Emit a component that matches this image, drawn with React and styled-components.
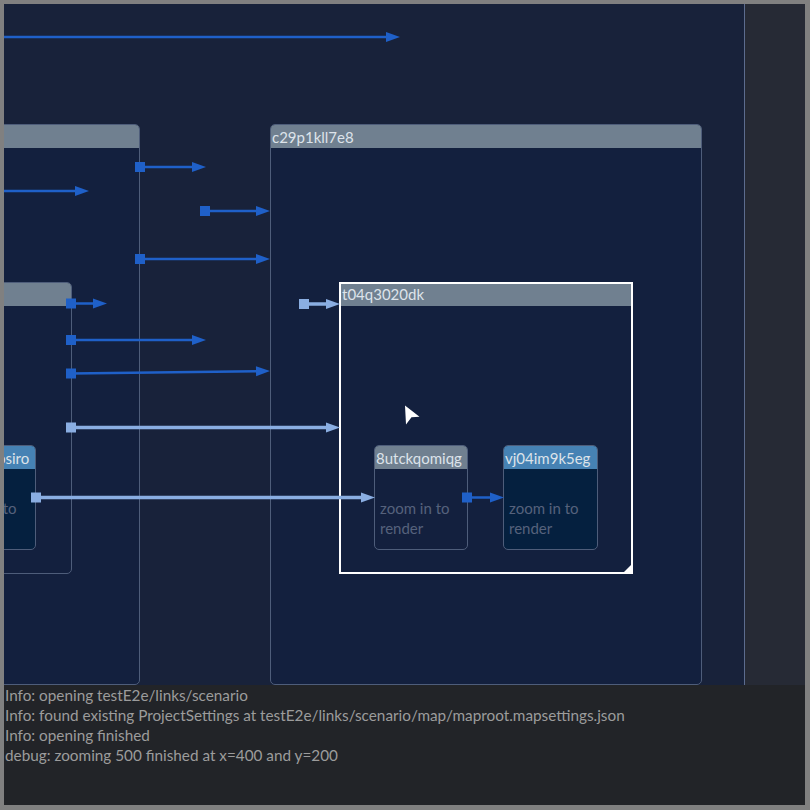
import React from "react";
import styled, { createGlobalStyle } from "styled-components";

const Global = createGlobalStyle`
  html, body { margin: 0; padding: 0; background: #808080; }
  body { font-family: Lato, "Open Sans", sans-serif; }
`;

const Frame = styled.div`
  width: 810px;
  height: 810px;
  box-sizing: border-box;
  padding: 4px 5px 5px 4px;
  background: #808080;
  display: grid;
  grid-template-columns: 740px 1px 1fr;
  grid-template-rows: 681px 1fr;
`;

const Canvas = styled.div`
  position: relative;
  overflow: hidden;
  background: #18223a;
`;

const Plane = styled.div`
  position: absolute;
  left: -4px;
  top: -4px;
  width: 810px;
  height: 810px;
`;

const Divider = styled.div`
  background: #5c6c8e;
`;

const SidePanel = styled.div`
  background: #262a35;
`;

const LogPanel = styled.div`
  grid-column: 1 / -1;
  background: #222428;
  color: #9c9c9c;
  font-size: 15.3px;
  line-height: 20px;
  padding: 0 0 0 1px;
  display: flex;
  flex-direction: column;
`;

const LogLine = styled.div`
  white-space: nowrap;
`;

const NodeBox = styled.div`
  position: absolute;
  left: ${(p) => p.$x}px;
  top: ${(p) => p.$y}px;
  width: ${(p) => p.$w}px;
  height: ${(p) => p.$h}px;
  box-sizing: border-box;
  border: ${(p) => (p.$selected ? "2px solid #ffffff" : "1px solid #4e5d7a")};
  border-radius: ${(p) => (p.$selected ? "0" : "5px")};
  background: ${(p) => p.$body};
  display: flex;
  flex-direction: column;
  overflow: hidden;
`;

const Header = styled.div`
  flex: none;
  height: ${(p) => (p.$selected ? "22px" : "23px")};
  background: ${(p) => p.$color};
  color: #dde3ea;
  font-size: 15px;
  line-height: ${(p) => (p.$selected ? "21px" : "24px")};
  padding-left: 1px;
  white-space: nowrap;
  overflow: hidden;
`;

const Body = styled.div`
  flex: 1;
  padding: 29px 5px 0 5px;
  color: #56627c;
  font-size: 15px;
  line-height: 20px;
`;

const ResizeGrip = styled.div`
  position: absolute;
  right: 0;
  bottom: 0;
  width: 0;
  height: 0;
  border-left: 7px solid transparent;
  border-bottom: 7px solid #ffffff;
`;

const EdgeLayer = styled.svg`
  position: absolute;
  left: 0;
  top: 0;
  width: 810px;
  height: 810px;
  pointer-events: none;
`;

const SLATE = "#708090";
const STEEL = "#4682b4";
const NAVY = "#13203e";
const DEEP = "#05203f";

const nodes = [
  { id: "a", x: -300, y: 124, w: 440, h: 561, header: SLATE, body: NAVY, label: "" },
  { id: "c29", x: 270, y: 124, w: 432, h: 561, header: SLATE, body: NAVY, label: "c29p1kll7e8" },
  { id: "b", x: -200, y: 282, w: 272, h: 292, header: SLATE, body: NAVY, label: "" },
  { id: "t04", x: 339, y: 282, w: 294, h: 292, header: SLATE, body: NAVY, label: "t04q3020dk", selected: true },
  { id: "c", x: -59, y: 445, w: 95, h: 105, header: STEEL, body: DEEP, label: "h9x2mposiro", text: "zoom in to render" },
  { id: "8ut", x: 374, y: 445, w: 94, h: 105, header: SLATE, body: NAVY, label: "8utckqomiqg", text: "zoom in to render" },
  { id: "vj0", x: 503, y: 445, w: 95, h: 105, header: STEEL, body: DEEP, label: "vj04im9k5eg", text: "zoom in to render" },
];

const DARK = "#1f60c8";
const LIGHT = "#8aaee2";

const edges = [
  { x1: -10, y1: 37, x2: 400, y2: 37, c: DARK, sq: false },
  { x1: 140, y1: 167, x2: 206, y2: 167, c: DARK, sq: true },
  { x1: -10, y1: 191, x2: 89, y2: 191, c: DARK, sq: false },
  { x1: 205, y1: 211, x2: 270, y2: 211, c: DARK, sq: true },
  { x1: 140, y1: 259, x2: 270, y2: 259, c: DARK, sq: true },
  { x1: 71, y1: 303.5, x2: 107, y2: 303.5, c: DARK, sq: true },
  { x1: 71, y1: 340, x2: 206, y2: 340, c: DARK, sq: true },
  { x1: 71, y1: 373.5, x2: 270, y2: 371, c: DARK, sq: true },
  { x1: 71, y1: 427.5, x2: 340, y2: 427.5, c: LIGHT, sq: true, thick: true },
  { x1: 304, y1: 304, x2: 340, y2: 304, c: LIGHT, sq: true, thick: true },
  { x1: 36, y1: 497.5, x2: 375, y2: 497.5, c: LIGHT, sq: true, thick: true },
  { x1: 467, y1: 497.5, x2: 504, y2: 497.5, c: DARK, sq: true },
];

function Edge({ e }) {
  const dx = e.x2 - e.x1;
  const dy = e.y2 - e.y1;
  const len = Math.hypot(dx, dy);
  const ux = dx / len;
  const uy = dy / len;
  const L = 14;
  const W = 5;
  const bx = e.x2 - ux * L;
  const by = e.y2 - uy * L;
  const pts = [
    [e.x2, e.y2],
    [bx - uy * W, by + ux * W],
    [bx + uy * W, by - ux * W],
  ]
    .map((p) => p.join(","))
    .join(" ");
  return (
    <g>
      <line
        x1={e.x1}
        y1={e.y1}
        x2={bx + ux * 2}
        y2={by + uy * 2}
        stroke={e.c}
        strokeWidth={e.thick ? 3.5 : 2.5}
      />
      <polygon points={pts} fill={e.c} />
      {e.sq && <rect x={e.x1 - 5} y={e.y1 - 5} width={10} height={10} fill={e.c} />}
    </g>
  );
}

function Node({ n }) {
  return (
    <NodeBox $x={n.x} $y={n.y} $w={n.w} $h={n.h} $body={n.body} $selected={n.selected}>
      <Header $color={n.header} $selected={n.selected}>{n.label}</Header>
      {n.text ? <Body>{n.text}</Body> : null}
      {n.selected ? <ResizeGrip /> : null}
    </NodeBox>
  );
}

const logs = [
  "Info: opening testE2e/links/scenario",
  "Info: found existing ProjectSettings at testE2e/links/scenario/map/maproot.mapsettings.json",
  "Info: opening finished",
  "debug: zooming 500 finished at x=400 and y=200",
];

export default function App() {
  return (
    <>
      <Global />
      <Frame>
        <Canvas>
          <Plane>
            {nodes.map((n) => (
              <Node key={n.id} n={n} />
            ))}
            <EdgeLayer viewBox="0 0 810 810">
              {edges.map((e, i) => (
                <Edge key={i} e={e} />
              ))}
              <polygon
                points="405,405.5 419.5,416.8 411.5,417.3 406,424.5"
                fill="#ffffff"
              />
            </EdgeLayer>
          </Plane>
        </Canvas>
        <Divider />
        <SidePanel />
        <LogPanel>
          {logs.map((l) => (
            <LogLine key={l}>{l}</LogLine>
          ))}
        </LogPanel>
      </Frame>
    </>
  );
}
